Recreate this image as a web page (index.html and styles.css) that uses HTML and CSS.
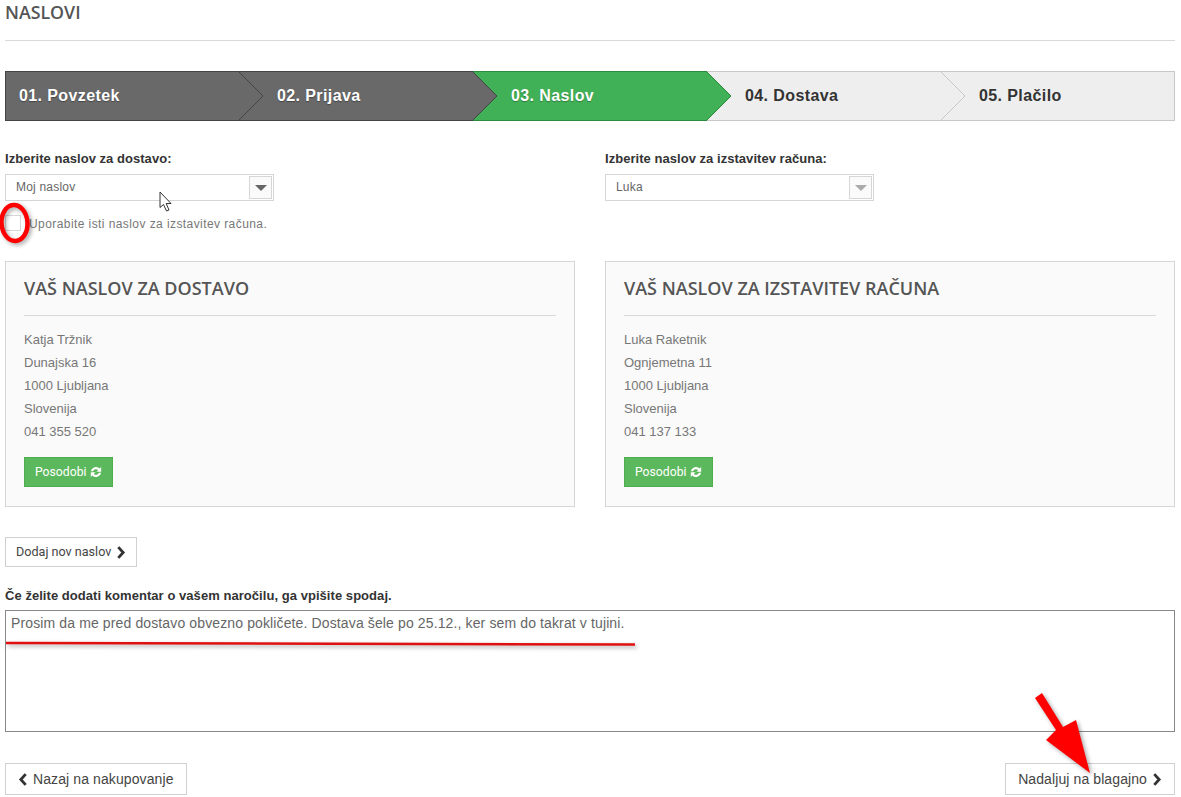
FILE: index.html
```html
<!DOCTYPE html>
<html lang="sl">
<head>
<meta charset="utf-8">
<title>Naslovi</title>
<link rel="stylesheet" href="styles.css">
</head>
<body>
<main class="page">
  <h1 class="page-title">NASLOVI</h1>
  <ol class="steps">
    <li class="step done"><span>01. Povzetek</span><svg class="chev" viewBox="0 0 25 50"><path d="M0 0 25 25 0 50"/></svg></li>
    <li class="step done s2"><span>02. Prijava</span><svg class="chev" viewBox="0 0 25 50"><path d="M0 0 25 25 0 50"/></svg></li>
    <li class="step current"><span>03. Naslov</span><svg class="chev" viewBox="0 0 25 50"><path d="M0 0 25 25 0 50"/></svg></li>
    <li class="step todo"><span>04. Dostava</span><svg class="chev" viewBox="0 0 25 50"><path d="M0 0 25 25 0 50"/></svg></li>
    <li class="step todo last"><span>05. Plačilo</span></li>
  </ol>

  <div class="cols selects">
    <div>
      <label class="field-label">Izberite naslov za dostavo:</label>
      <div class="select"><span class="select-text">Moj naslov</span><span class="select-btn"><i class="tri"></i></span></div>
      <label class="check"><span class="box"></span><span class="check-text">Uporabite isti naslov za izstavitev računa.</span></label>
    </div>
    <div>
      <label class="field-label">Izberite naslov za izstavitev računa:</label>
      <div class="select"><span class="select-text">Luka</span><span class="select-btn"><i class="tri light"></i></span></div>
    </div>
  </div>

  <div class="cols cards">
    <section class="card">
      <h2>VAŠ NASLOV ZA DOSTAVO</h2>
      <ul class="address">
        <li>Katja Tržnik</li><li>Dunajska 16</li><li>1000 Ljubljana</li><li>Slovenija</li><li>041 355 520</li>
      </ul>
      <a class="update">Posodobi
        <svg class="refresh" viewBox="0 0 12 12"><path d="M.8 5.200A5.300 5.300 0 0 1 9.700 2.500L11.200 1V5.800H6.500L8.200 4.100A3.200 3.200 0 0 0 3 5.200ZM11.200 6.800A5.300 5.300 0 0 1 2.300 9.500L.8 11V6.200H5.500L3.800 7.900A3.200 3.200 0 0 0 9 6.800Z"/></svg>
      </a>
    </section>
    <section class="card">
      <h2>VAŠ NASLOV ZA IZSTAVITEV RAČUNA</h2>
      <ul class="address">
        <li>Luka Raketnik</li><li>Ognjemetna 11</li><li>1000 Ljubljana</li><li>Slovenija</li><li>041 137 133</li>
      </ul>
      <a class="update">Posodobi
        <svg class="refresh" viewBox="0 0 12 12"><path d="M.8 5.200A5.300 5.300 0 0 1 9.700 2.500L11.200 1V5.800H6.500L8.200 4.100A3.200 3.200 0 0 0 3 5.200ZM11.200 6.800A5.300 5.300 0 0 1 2.300 9.500L.8 11V6.200H5.500L3.800 7.900A3.200 3.200 0 0 0 9 6.800Z"/></svg>
      </a>
    </section>
  </div>

  <a class="btn small">Dodaj nov naslov <svg class="arrow" viewBox="0 0 8 12"><path d="M1.500 1 6 6 1.500 11"/></svg></a>

  <label class="comment-label">Če želite dodati komentar o vašem naročilu, ga vpišite spodaj.</label>
  <div class="comment">Prosim da me pred dostavo obvezno pokličete. Dostava šele po 25.12., ker sem do takrat v tujini.</div>

  <div class="bottom">
    <a class="btn large"><svg class="arrow" viewBox="0 0 8 12"><path d="M6.500 1 2 6 6.500 11"/></svg> Nazaj na nakupovanje</a>
    <a class="btn large">Nadaljuj na blagajno <svg class="arrow" viewBox="0 0 8 12"><path d="M1.500 1 6 6 1.500 11"/></svg></a>
  </div>
</main>

<svg class="note note-oval" viewBox="0 0 34 52"><ellipse cx="14.500" cy="25" rx="13" ry="18" transform="rotate(-4 14.500 25)"/></svg>
<svg class="note note-line" viewBox="0 0 640 12"><path d="M1 5 630 6.500"/></svg>
<svg class="note note-arrow" viewBox="0 0 110 110"><path d="M2 7 9 2 30 36 43 29 57 82 13 49 23 39Z"/></svg>
<svg class="note note-cursor" viewBox="0 0 14 22"><path d="M1 1V16.500L4.500 13.500 7.500 20 10 19 7.200 12.500H12Z"/></svg>
</body>
</html>
```
FILE: styles.css
```css
* { box-sizing: border-box; }
html, body { margin: 0; padding: 0; background: #fff; }
body {
  position: relative;
  width: 1181px;
  height: 797px;
  overflow: hidden;
  font-family: "Liberation Sans", Arial, sans-serif;
  color: #666;
}
.page { padding: 0 6px 0 5px; }
.page-title {
  margin: 0;
  height: 41px;
  border-bottom: 1px solid #d9d9d9;
  font: 600 17.800px/24px "Open Sans", sans-serif;
  color: #555;
}
.steps {
  display: flex;
  list-style: none;
  margin: 30px 0 0;
  padding: 0;
  height: 50px;
}
.step {
  position: relative;
  width: 234px;
  height: 50px;
  display: flex;
  align-items: center;
  padding-left: 38px;
  font: 700 16px/20px "Liberation Sans", Arial, sans-serif;
  letter-spacing: .4px;
  border-top: 1px solid;
  border-bottom: 1px solid;
}
.step:first-child { padding-left: 13px; border-left: 1px solid #444; }
.step.done { background: #696969; color: #fff; border-color: #444; text-shadow: 0 1px 1px rgba(0,0,0,.35); }
.step.current { background: #41b157; color: #fff; border-color: #2b8a3e; text-shadow: 0 1px 1px rgba(0,0,0,.3); }
.step.todo { background: #eee; color: #333; border-color: #c8c8c8; }
.step.last { border-right: 1px solid #c8c8c8; }
.chev {
  position: absolute;
  z-index: 2;
  top: -1px;
  left: calc(100% - 1px);
  width: 25px;
  height: 50px;
  overflow: visible;
}
.chev path { stroke-width: 1; stroke-linejoin: miter; }
.done .chev path { fill: #696969; stroke: #444; }
.current .chev path { fill: #41b157; stroke: #2b8a3e; }
.todo .chev path { fill: #eee; stroke: #c8c8c8; }

.cols {
  display: grid;
  grid-template-columns: 570px 570px;
  column-gap: 30px;
}
.selects { margin-top: 30px; height: 110px; }
.field-label {
  display: block;
  font: 700 13px/15px "Liberation Sans", Arial, sans-serif;
  letter-spacing: .04px;
  color: #333;
}
.select {
  display: flex;
  align-items: center;
  justify-content: space-between;
  width: 269px;
  height: 27px;
  margin-top: 8px;
  padding: 0 1px 0 10px;
  border: 1px solid #d6d6d6;
  font-size: 12px;
  letter-spacing: .2px;
  color: #666;
}
.select-text { margin-top: -2px; }
.select-btn {
  display: flex;
  align-items: center;
  justify-content: center;
  width: 23px;
  height: 23px;
  background: #fafafa;
  border: 1px solid #d6d6d6;
}
.tri {
  width: 0;
  height: 0;
  border-left: 6px solid transparent;
  border-right: 6px solid transparent;
  border-top: 6px solid #666;
}
.tri.light { border-top-color: #aaa; }
.check {
  display: flex;
  align-items: center;
  gap: 9px;
  margin-top: 14px;
  font-size: 12px;
  letter-spacing: .42px;
  color: #777;
}
.box {
  width: 16px;
  height: 16px;
  border: 1px solid #d6d6d6;
  background: #fff;
}
.check-text { margin-left: -1px; padding-top: 1px; }
.card {
  height: 246px;
  padding: 14px 18px 0;
  border: 1px solid #d6d6d6;
  background: #fafafa;
}
.card h2 {
  margin: 0;
  height: 40px;
  border-bottom: 1px solid #d9d9d9;
  font: 600 18px/24px "Open Sans", sans-serif;
  color: #555;
}
.address {
  list-style: none;
  margin: 12px 0 0;
  padding: 0;
  font: 13px/23px "Liberation Sans", Arial, sans-serif;
  color: #777;
}
.update {
  display: inline-flex;
  align-items: center;
  gap: 4px;
  width: 89px;
  height: 30px;
  margin-top: 14px;
  padding: 0 9px 0 10px;
  background: #5cb85c;
  border: 1px solid #4cae4c;
  font: 400 12.200px/1 "Roboto", sans-serif;
  color: #fff;
}
.refresh { width: 12px; height: 12px; fill: #fff; }
.btn {
  display: inline-flex;
  align-items: center;
  border: 1px solid #d0d0d0;
  background: #fff;
  color: #444;
}
.btn.small {
  margin-top: 30px;
  height: 30px;
  padding: 0 10px;
  gap: 5px;
  font: 12.600px/1 "Roboto", sans-serif;
}
.arrow {
  width: 10px;
  height: 13px;
  fill: none;
  stroke: #333;
  stroke-width: 2.600;
}
.comment-label {
  display: block;
  margin-top: 21px;
  font: 700 13px/15px "Liberation Sans", Arial, sans-serif;
  letter-spacing: .05px;
  color: #333;
}
.comment {
  height: 122px;
  margin-top: 7px;
  padding: 4px 5px;
  border: 1px solid #888;
  font-size: 14px;
  letter-spacing: .125px;
  line-height: 16px;
  color: #666;
}
.bottom {
  display: flex;
  justify-content: space-between;
  margin-top: 31px;
}
.btn.large {
  height: 32px;
  padding: 0 12px;
  gap: 5px;
  font: 14px/1 "Liberation Sans", Arial, sans-serif;
  letter-spacing: .1px;
}

.note { position: absolute; overflow: visible; filter: drop-shadow(2px 2px 2px rgba(0,0,0,.35)); }
.note-oval { left: 0; top: 198px; width: 34px; height: 52px; fill: none; stroke: #f00; stroke-width: 4.500; }
.note-line { left: 5px; top: 638px; width: 640px; height: 12px; fill: none; stroke: #e01010; stroke-width: 2.500; }
.note-arrow { left: 1033px; top: 691px; width: 110px; height: 110px; fill: #f00; }
.note-cursor { left: 159px; top: 191px; width: 14px; height: 22px; fill: #fff; stroke: #333; stroke-width: 1; filter: none; }
```
